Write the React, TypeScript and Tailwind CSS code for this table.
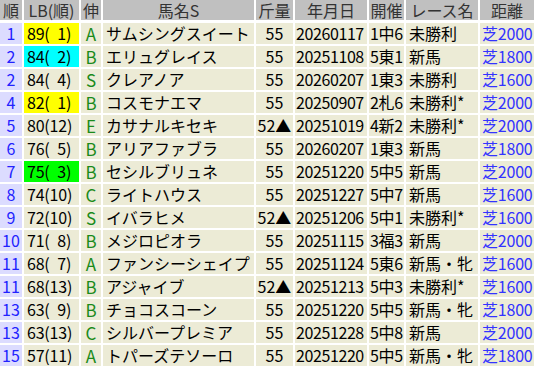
const rows = [
  { rank: "1", lb: "89(\u20021)", hl: "bg-[#ffff00]", ext: "A", name: "サムシングスイート", kin: "55", date: "20260117", kai: "1中6", race: "未勝利", dist: "芝2000" },
  { rank: "2", lb: "84(\u20022)", hl: "bg-[#00ffff]", ext: "B", name: "エリュグレイス", kin: "55", date: "20251108", kai: "5東1", race: "新馬", dist: "芝1800" },
  { rank: "2", lb: "84(\u20024)", hl: "", ext: "S", name: "クレアノア", kin: "55", date: "20260207", kai: "1東3", race: "未勝利", dist: "芝1600" },
  { rank: "4", lb: "82(\u20021)", hl: "bg-[#ffff00]", ext: "B", name: "コスモナエマ", kin: "55", date: "20250907", kai: "2札6", race: "未勝利*", dist: "芝2000" },
  { rank: "5", lb: "80(12)", hl: "", ext: "E", name: "カサナルキセキ", kin: "52▲", date: "20251019", kai: "4新2", race: "未勝利*", dist: "芝2000" },
  { rank: "6", lb: "76(\u20025)", hl: "", ext: "B", name: "アリアファブラ", kin: "55", date: "20260207", kai: "1東3", race: "新馬", dist: "芝1800" },
  { rank: "7", lb: "75(\u20023)", hl: "bg-[#00ff00]", ext: "B", name: "セシルブリュネ", kin: "55", date: "20251220", kai: "5中5", race: "新馬", dist: "芝2000" },
  { rank: "8", lb: "74(10)", hl: "", ext: "C", name: "ライトハウス", kin: "55", date: "20251227", kai: "5中7", race: "新馬", dist: "芝1600" },
  { rank: "9", lb: "72(10)", hl: "", ext: "S", name: "イバラヒメ", kin: "52▲", date: "20251206", kai: "5中1", race: "未勝利*", dist: "芝1600" },
  { rank: "10", lb: "71(\u20028)", hl: "", ext: "B", name: "メジロピオラ", kin: "55", date: "20251115", kai: "3福3", race: "新馬", dist: "芝2000" },
  { rank: "11", lb: "68(\u20027)", hl: "", ext: "A", name: "ファンシーシェイプ", kin: "55", date: "20251124", kai: "5東6", race: "新馬・牝", dist: "芝1600" },
  { rank: "11", lb: "68(13)", hl: "", ext: "B", name: "アジャイブ", kin: "52▲", date: "20251213", kai: "5中3", race: "未勝利*", dist: "芝1600" },
  { rank: "13", lb: "63(\u20029)", hl: "", ext: "B", name: "チョコスコーン", kin: "55", date: "20251220", kai: "5中5", race: "新馬・牝", dist: "芝1800" },
  { rank: "13", lb: "63(13)", hl: "", ext: "C", name: "シルバープレミア", kin: "55", date: "20251228", kai: "5中8", race: "新馬", dist: "芝2000" },
  { rank: "15", lb: "57(11)", hl: "", ext: "A", name: "トパーズテソーロ", kin: "55", date: "20251220", kai: "5中5", race: "新馬・牝", dist: "芝1800" },
];

const headers = ["順", "LB(順)", "伸", "馬名S", "斤量", "年月日", "開催", "レース名", "距離"];

export default function App() {
  return (
    <div className="w-[534px] h-[366px] overflow-hidden bg-white font-['Noto_Sans_CJK_JP',sans-serif] text-[16px] leading-[21px] text-black">
      <div className="grid grid-cols-[22px_55px_20px_151px_37px_72px_35px_72px_54px] auto-rows-[21px] gap-x-[2px] gap-y-[2px]">
        {headers.map((h) => (
          <div key={h} className="bg-[#c0c0c0] text-[#333] flex items-center justify-center h-[20px] whitespace-nowrap">
            <span className="leading-[16px]">{h}</span>
          </div>
        ))}
        {rows.map((r, i) => (
          <div key={i} className="contents">
            <div className="bg-[#dcdcff] text-[#2222ff] flex items-center justify-center">{r.rank}</div>
            <div className={`${r.hl || "bg-[#ecebd6]"} flex items-center pl-[3px] whitespace-pre tracking-[-0.2px]`}>{r.lb}</div>
            <div className="bg-[#ecebd6] text-[#1a8a1a] text-[17px] flex items-center justify-center">{r.ext}</div>
            <div className="bg-[#ecebd6] flex items-center pl-[3px] whitespace-nowrap">{r.name}</div>
            <div className="bg-[#ecebd6] flex items-center justify-center whitespace-nowrap">{r.kin}</div>
            <div className="bg-[#ecebd6] flex items-center pl-[1px] tracking-[-0.4px] whitespace-nowrap">{r.date}</div>
            <div className="bg-[#ecebd6] flex items-center pl-[1px] tracking-[-0.3px] whitespace-nowrap">{r.kai}</div>
            <div className="bg-[#ecebd6] flex items-center pl-[3px] whitespace-nowrap">{r.race}</div>
            <div className="bg-[#ecebd6] text-[#3333ff] flex items-center pl-[2px] tracking-[-0.2px] whitespace-nowrap">{r.dist}</div>
          </div>
        ))}
      </div>
    </div>
  );
}
